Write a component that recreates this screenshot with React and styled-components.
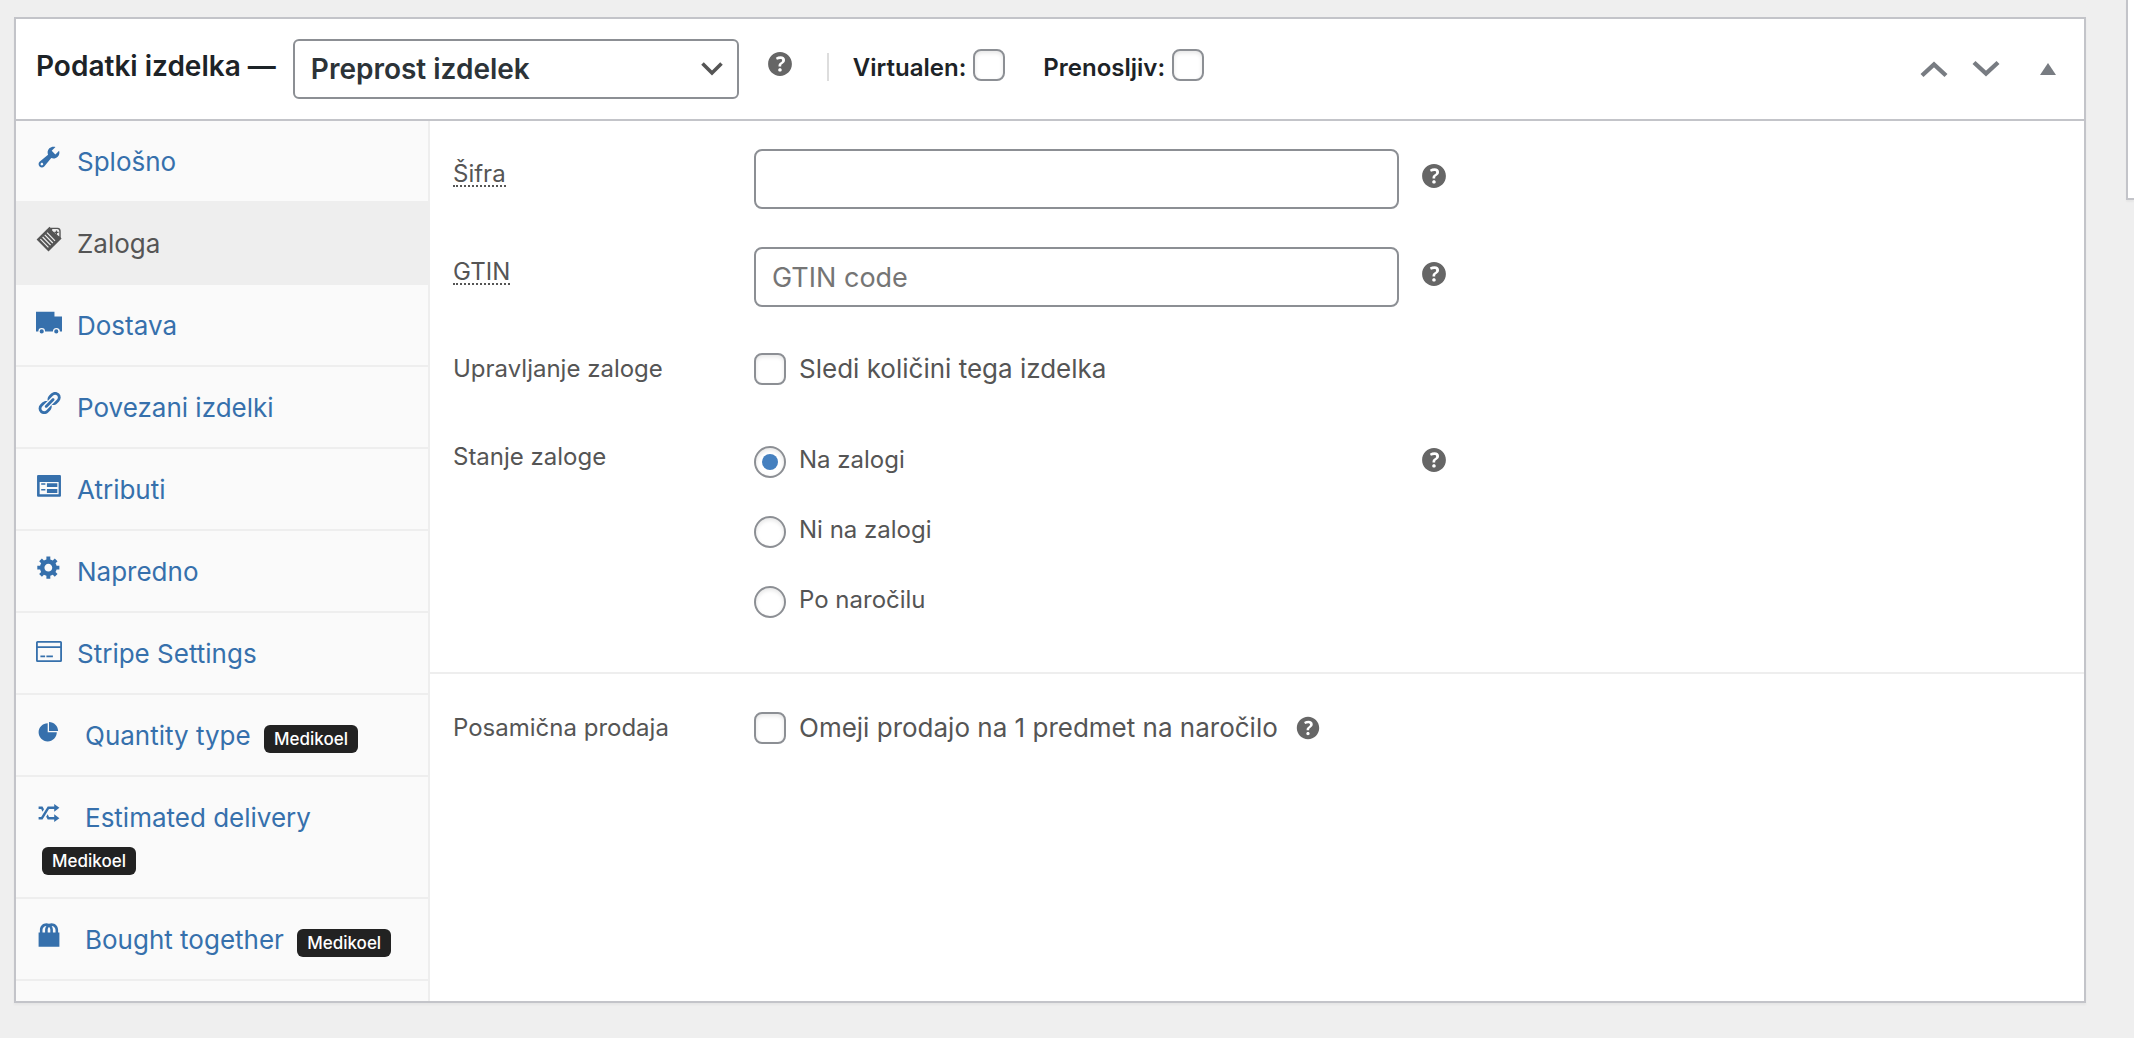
import styled, { createGlobalStyle } from 'styled-components'

const GlobalStyle = createGlobalStyle`
    * {
        box-sizing: border-box;
    }
    body {
        margin: 0;
        background: #efefef;
        color: #555555;
        font-family: Inter, "Liberation Sans", sans-serif;
        font-size: 24px;
    }
`

const Page = styled.div`
    display: flex;
    align-items: flex-start;
    gap: 40px;
    padding-left: 14px;
    overflow: hidden;
`

const Panel = styled.section`
    flex: 1;
    min-width: 0;
    margin: 17px 0 35px;
    background: #ffffff;
    border: 2px solid #c3c4c9;
    box-shadow: 0 2px 2px rgba(0, 0, 0, 0.04);
`

const SidePanel = styled.aside`
    flex: 0 0 8px;
    height: 200px;
    background: #ffffff;
    border: solid #c3c4c9;
    border-width: 0 0 2px 2px;
    box-shadow: 0 2px 2px rgba(0, 0, 0, 0.04);
`

const Header = styled.header`
    display: flex;
    align-items: center;
    height: 102px;
    padding: 0 8px 0 20px;
    border-bottom: 2px solid #c3c4c9;
    color: #1d2327;
    font-weight: 600;
`

const Title = styled.h2`
    margin: 0 17px 6px 0;
    font-size: 28px;
    font-weight: 600;
    line-height: 32px;
    white-space: nowrap;
`

const SelectBox = styled.div`
    display: grid;
    align-items: center;
    width: 446px;
    margin-right: 24px;

    select, svg {
        grid-area: 1 / 1;
    }

    svg {
        justify-self: end;
        margin-right: 16px;
        pointer-events: none;
    }
`

const Select = styled.select`
    appearance: none;
    width: 100%;
    height: 60px;
    padding: 0 48px 0 16px;
    border: 2px solid #8c8f94;
    border-radius: 6px;
    background: #ffffff;
    color: #2c3338;
    font-family: inherit;
    font-size: 28px;
    font-weight: 600;
`

const HeaderOptions = styled.div`
    display: flex;
    align-items: center;
    gap: 38px;
    height: 28px;
    margin: 0 0 4px 30px;
    padding-left: 24px;
    border-left: 2px solid #dddddd;

    input {
        margin-bottom: 4px;
    }
`

const HeaderOption = styled.label`
    display: flex;
    align-items: center;
    gap: 7px;
    font-size: 24px;
`

const HeaderActions = styled.div`
    display: flex;
    align-items: center;
    gap: 16px;
    margin-left: auto;
`

const IconButton = styled.button`
    display: flex;
    justify-content: center;
    width: ${props => props.$width}px;
    padding: 0;
    border: 0;
    background: none;
    color: #787c82;
`

const Content = styled.div`
    display: flex;
`

const Tabs = styled.nav`
    flex: 0 0 414px;
    padding-bottom: 20px;
    background: #fafafa;
    border-right: 2px solid #eeeeee;
`

const Tab = styled.a`
    display: block;
    margin-right: ${props => (props.$active ? '-2px' : '0')};
    padding: 21px 20px 19px;
    border-bottom: 2px solid #eeeeee;
    background: ${props => (props.$active ? '#eeeeee' : 'transparent')};
    color: ${props => (props.$active ? '#555555' : '#3670ac')};
    font-size: 26px;
    line-height: 40px;
    text-decoration: none;

    svg {
        margin-right: ${props => (props.$plugin ? '23px' : '15px')};
        vertical-align: 1px;
    }
`

const Badge = styled.span`
    display: inline-block;
    margin-left: 6px;
    padding: 0 10px;
    border-radius: 6px;
    background: #222222;
    color: #ffffff;
    font-size: 17px;
    font-weight: 500;
    line-height: 28px;
`

const Fields = styled.div`
    flex: 1;
    min-width: 0;
`

const Group = styled.div`
    padding: 28px 23px 54px;

    & + & {
        padding-top: 38px;
        border-top: 2px solid #eeeeee;
    }
`

const Field = styled.div`
    display: flex;
    align-items: flex-start;
    margin-bottom: ${props => props.$space || 0}px;
`

const fieldName = `
    flex: 0 0 301px;
    font-size: 24px;
    line-height: 32px;
`

const FieldLabel = styled.label`
    ${fieldName}
    padding: 9px 0;

    abbr {
        display: inline-block;
        border-bottom: 2px dotted #555555;
        line-height: 22px;
        text-decoration: none;
    }
`

const FieldName = styled.span`
    ${fieldName}
`

const TextInput = styled.input`
    width: 645px;
    height: 60px;
    margin-right: 18px;
    padding: 0 16px;
    border: 2px solid #8c8f94;
    border-radius: 8px;
    background: #ffffff;
    color: #2c3338;
    font-family: inherit;
    font-size: 27px;

    &::placeholder {
        color: #757575;
        opacity: 1;
    }
`

const Check = styled.input`
    appearance: none;
    flex: none;
    display: grid;
    place-items: center;
    width: 32px;
    height: 32px;
    margin: 0;
    border: 2px solid #8c8f94;
    border-radius: ${props => (props.type === 'radio' ? '50%' : '8px')};
    background: #ffffff;
    box-shadow: inset 0 2px 4px rgba(0, 0, 0, 0.1);

    &:checked::before {
        content: '';
        width: 16px;
        height: 16px;
        border-radius: 50%;
        background: #4580bf;
    }
`

const Choice = styled.label`
    display: flex;
    align-items: center;
    gap: 13px;
    font-size: 26px;
    line-height: 32px;
`

const RadioList = styled.div`
    display: flex;
    flex-direction: column;
    gap: 38px;
    width: 645px;
    margin-right: 18px;
    padding-top: 5px;
`

const RadioChoice = styled(Choice)`
    height: 32px;
    font-size: 24px;

    span {
        padding-bottom: 4px;
    }
`

const TipBox = styled.span`
    display: flex;
    padding: ${props => props.$pad || '0'};
    color: #666666;
`

const Dashicon = ({ d, size = 26 }) => (
    <svg width={size} height={size} viewBox="0 0 20 20" fill="currentColor" fillRule="evenodd" aria-hidden="true">
        <path d={d} />
    </svg>
)

const icons = {
    tools: 'M16.68 9.77c-1.34 1.34-3.3 1.67-4.95.99l-5.41 6.52c-.99.99-2.59.99-3.58 0s-.99-2.59 0-3.57l6.52-5.42c-.68-1.65-.35-3.61.99-4.95 1.28-1.28 3.12-1.62 4.72-1.06l-2.89 2.89 2.82 2.82 2.86-2.87c.53 1.58.18 3.39-1.08 4.65zM3.81 16.21c.4.39 1.04.39 1.43 0 .4-.4.4-1.04 0-1.43-.39-.4-1.03-.4-1.43 0-.39.39-.39 1.03 0 1.43z',
    truck: 'M0 2.8H14.2V6.6H20V18H18.4A2.6 2.6 0 0 0 13 18H7A2.6 2.6 0 0 0 1.8 18H0zM4.4 16.4a1.6 1.6 0 1 1 0 3.2a1.6 1.6 0 0 1 0-3.2zM15.6 16.4a1.6 1.6 0 1 1 0 3.2a1.6 1.6 0 0 1 0-3.2z',
    links: 'M17.74 2.76c1.68 1.69 1.68 4.41 0 6.1l-1.53 1.52c-1.12 1.12-2.7 1.47-4.14 1.09l2.62-2.61.76-.77.76-.76c.84-.84.84-2.2 0-3.04-.84-.85-2.2-.85-3.04 0l-.77.76-3.38 3.38c-.37-1.44-.02-3.02 1.1-4.14l1.52-1.53c1.69-1.68 4.42-1.68 6.1 0zM8.59 13.43l5.34-5.34c.42-.42.42-1.1 0-1.52-.44-.43-1.13-.39-1.53 0l-5.33 5.34c-.42.42-.42 1.1 0 1.52.44.43 1.13.39 1.52 0zm-.76 2.29l4.14-4.15c.38 1.44.03 3.02-1.09 4.14l-1.52 1.53c-1.69 1.68-4.41 1.68-6.1 0-1.68-1.68-1.68-4.42 0-6.1l1.53-1.52c1.12-1.12 2.7-1.47 4.14-1.1l-4.14 4.15c-.85.84-.85 2.2 0 3.05.84.84 2.2.84 3.04 0z',
    table: 'M1.6 2.4H18.4Q19.2 2.4 19.2 3.2V18.2Q19.2 19 18.4 19H1.6Q.8 19 .8 18.2V3.2Q.8 2.4 1.6 2.4zM2.8 7.6V17.2H17.4V7.6zM4 8.6H7.2V9.8H4zM8.4 8.6H16.4V11.6H8.4zM4 13H7.2V14.2H4zM8.4 13H16.4V16.2H8.4z',
    generic: 'M18 12h-2.18c-.17.7-.44 1.35-.81 1.93l1.54 1.54-2.1 2.1-1.54-1.54c-.58.36-1.23.63-1.91.79V19H8v-2.18c-.68-.16-1.33-.43-1.91-.79l-1.54 1.54-2.12-2.12 1.54-1.54c-.36-.58-.63-1.23-.79-1.91H1V9.03h2.17c.16-.7.44-1.35.8-1.94L2.43 5.55l2.1-2.1 1.54 1.54c.58-.37 1.24-.64 1.93-.81V2h3v2.18c.68.16 1.33.43 1.91.79l1.54-1.54 2.12 2.12-1.54 1.54c.36.59.64 1.24.8 1.94H18V12zm-8.5 1.5c1.66 0 3-1.34 3-3s-1.34-3-3-3-3 1.34-3 3 1.34 3 3 3z',
    card: 'M1.2 3.8H18.8Q20 3.8 20 5V18.8Q20 20 18.8 20H1.2Q0 20 0 18.8V5Q0 3.8 1.2 3.8zM1.4 5.2V7.8H18.6V5.2zM1.4 9.2V18.6H18.6V9.2zM3.4 15H7V16.4H3.4zM8 15H13V16.4H8z',
    pie: 'M10 10V3c3.87 0 7 3.13 7 7h-7zM9 4v7h7c0 3.87-3.13 7-7 7s-7-3.13-7-7 3.13-7 7-7z',
    random: 'M18 6.01L14 9V7h-4l-5 8H2v-2h2l5-8h5V3zM2 5h3l1.15 2.17-1.12 1.8L4 7H2V5zm16 9.01L14 17v-2H9l-1.15-2.17 1.12-1.8L10 13h4v-2z',
    products: 'M17 8h1v11H2V8h1V6c0-2.76 2.24-5 5-5 .71 0 1.39.15 2 .42.61-.27 1.29-.42 2-.42 2.76 0 5 2.24 5 5v2zM5 6v2h2V6c0-1.13.39-2.16 1.02-3H8C6.35 3 5 4.35 5 6zm10 2V6c0-1.65-1.35-3-3-3h-.02c.63.84 1.02 1.87 1.02 3v2h2zm-5-4.22C9.39 4.33 9 5.12 9 6v2h2V6c0-.88-.39-1.67-1-2.22z',
    help: 'M17 10c0-3.87-3.14-7-7-7-3.87 0-7 3.13-7 7s3.13 7 7 7c3.86 0 7-3.13 7-7zm-6.3 1.48H9.14v-.43c0-.38.08-.7.24-.98s.46-.57.88-.89c.41-.29.68-.53.81-.71.14-.18.2-.39.2-.62 0-.25-.09-.44-.28-.58-.19-.13-.45-.19-.79-.19-.58 0-1.25.15-2 .45l-.64-1.28c.87-.49 1.8-.74 2.77-.74.81 0 1.45.2 1.92.58.48.39.71.91.71 1.55 0 .43-.09.8-.29 1.11-.19.32-.57.67-1.11 1.06-.38.28-.61.49-.71.63-.1.15-.15.34-.15.57v.46zm-1.47 2.74c-.18-.17-.27-.42-.27-.73 0-.33.08-.58.26-.75s.43-.25.77-.25c.32 0 .57.09.75.26s.27.42.27.74c0 .3-.09.55-.27.72-.18.18-.43.27-.75.27-.33 0-.58-.09-.76-.26z',
}

const NoteIcon = () => (
    <svg width="26" height="26" viewBox="0 0 26 26" fill="none" aria-hidden="true">
        <path d="M13.5 .8L25.6 12.6L12.5 25.6L.6 13.6Z" fill="currentColor" />
        <path d="M15.5 2.4H21.5Q24.2 2.6 24 5.4V12L15.5 5Z" fill="#eeeeee" stroke="currentColor" strokeWidth="1.4" />
        <path d="M4.4 13.2L12.4 21.4M6.6 11L14.6 19.2M8.8 8.8L16.8 17M11 6.6L19 14.8" stroke="#eeeeee" strokeWidth="1.2" />
        <path d="M12.5 3.5L22.5 13.5" stroke="currentColor" strokeWidth="2.4" />
        <path d="M20.5 4.4V8.4M18.5 6.4H22.5" stroke="currentColor" strokeWidth="1.2" />
    </svg>
)

const Tip = ({ size = 34, pad }) => (
    <TipBox $pad={pad} role="img" aria-label="Pomoč">
        <Dashicon d={icons.help} size={size} />
    </TipBox>
)

const Chevron = ({ up }) => (
    <svg width="28" height="18" viewBox="0 0 28 18" fill="none" stroke="currentColor" strokeWidth="4.4" aria-hidden="true">
        <path d={up ? 'M2 15.5L14 4.5L26 15.5' : 'M2 2.5L14 13.5L26 2.5'} />
    </svg>
)

const tabs = [
    { name: 'Splošno', icon: icons.tools },
    { name: 'Zaloga', active: true },
    { name: 'Dostava', icon: icons.truck },
    { name: 'Povezani izdelki', icon: icons.links },
    { name: 'Atributi', icon: icons.table },
    { name: 'Napredno', icon: icons.generic },
    { name: 'Stripe Settings', icon: icons.card },
    { name: 'Quantity type', icon: icons.pie, badge: 'Medikoel' },
    { name: 'Estimated delivery', icon: icons.random, badge: 'Medikoel' },
    { name: 'Bought together', icon: icons.products, badge: 'Medikoel' },
]

const stock = ['Na zalogi', 'Ni na zalogi', 'Po naročilu']

export default function App(){
    return(
        <>
            <GlobalStyle />
            <Page>
                <Panel>
                    <Header>
                        <Title>Podatki izdelka —</Title>
                        <SelectBox>
                            <Select aria-label="Vrsta izdelka">
                                <option>Preprost izdelek</option>
                            </Select>
                            <svg width="22" height="14" viewBox="0 0 22 14" fill="none" stroke="#555555" strokeWidth="3.6" aria-hidden="true">
                                <path d="M1.5 1.5L11 11L20.5 1.5" />
                            </svg>
                        </SelectBox>
                        <Tip pad="0 0 10px" />
                        <HeaderOptions>
                            <HeaderOption>Virtualen:<Check type="checkbox" /></HeaderOption>
                            <HeaderOption>Prenosljiv:<Check type="checkbox" /></HeaderOption>
                        </HeaderOptions>
                        <HeaderActions>
                            <IconButton $width={36} aria-label="Premakni gor"><Chevron up /></IconButton>
                            <IconButton $width={36} aria-label="Premakni dol"><Chevron /></IconButton>
                            <IconButton $width={56} aria-label="Skrij ploščo">
                                <svg width="16" height="12" viewBox="0 0 16 12" fill="currentColor" aria-hidden="true">
                                    <path d="M8 0L16 12H0Z" />
                                </svg>
                            </IconButton>
                        </HeaderActions>
                    </Header>
                    <Content>
                        <Tabs>
                            {tabs.map(tab => (
                                <Tab key={tab.name} href="#" $active={tab.active} $plugin={tab.badge}>
                                    {tab.icon ? <Dashicon d={tab.icon} /> : <NoteIcon />}
                                    {tab.name}
                                    {tab.badge && <> <Badge>{tab.badge}</Badge></>}
                                </Tab>
                            ))}
                        </Tabs>
                        <Fields>
                            <Group>
                                <Field $space={38}>
                                    <FieldLabel htmlFor="sku"><abbr>Šifra</abbr></FieldLabel>
                                    <TextInput id="sku" type="text" />
                                    <Tip pad="10px 0 0" />
                                </Field>
                                <Field $space={46}>
                                    <FieldLabel htmlFor="gtin"><abbr>GTIN</abbr></FieldLabel>
                                    <TextInput id="gtin" type="text" placeholder="GTIN code" />
                                    <Tip pad="10px 0 0" />
                                </Field>
                                <Field $space={56}>
                                    <FieldName>Upravljanje zaloge</FieldName>
                                    <Choice><Check type="checkbox" />Sledi količini tega izdelka</Choice>
                                </Field>
                                <Field>
                                    <FieldName>Stanje zaloge</FieldName>
                                    <RadioList>
                                        {stock.map((name, i) => (
                                            <RadioChoice key={name}>
                                                <Check type="radio" name="stock" defaultChecked={i === 0} />
                                                <span>{name}</span>
                                            </RadioChoice>
                                        ))}
                                    </RadioList>
                                    <Tip pad="2px 0 0" />
                                </Field>
                            </Group>
                            <Group>
                                <Field>
                                    <FieldName>Posamična prodaja</FieldName>
                                    <Choice><Check type="checkbox" />Omeji prodajo na 1 predmet na naročilo</Choice>
                                    <Tip size={32} pad="0 0 0 14px" />
                                </Field>
                            </Group>
                        </Fields>
                    </Content>
                </Panel>
                <SidePanel />
            </Page>
        </>
    )
}
